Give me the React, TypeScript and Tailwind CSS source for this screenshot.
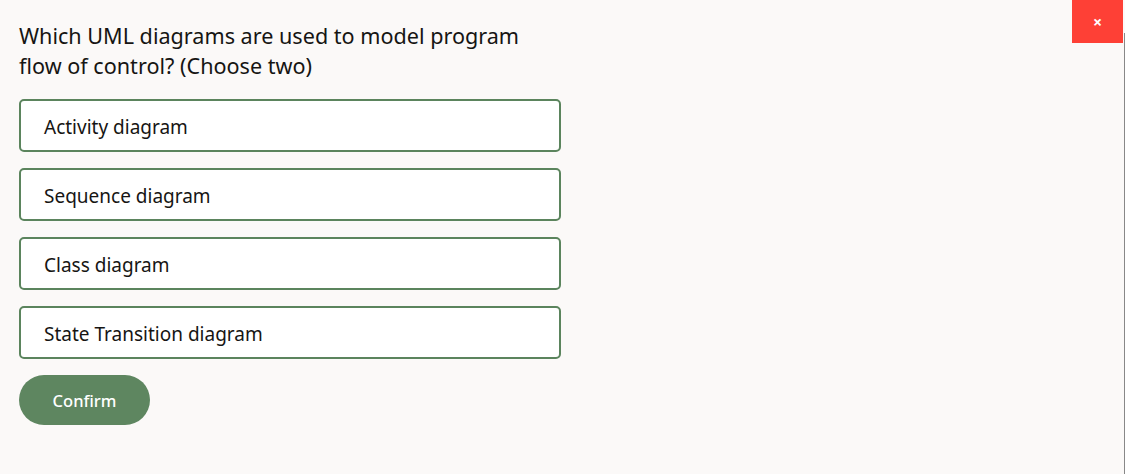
import React from "react";

const options = [
  "Activity diagram",
  "Sequence diagram",
  "Class diagram",
  "State Transition diagram",
];

export default function App() {
  return (
    <div
      className="relative flex h-[474px] w-[1125px] bg-[#fbf9f8] text-[#161513]"
      style={{ fontFamily: '"Noto Sans", "Open Sans", sans-serif' }}
    >
      <div className="flex w-[542px] flex-col pl-[19px] pt-[21px]">
        <h1 className="text-[21.6px] leading-[30px] text-[#161513]">
          Which UML diagrams are used to model program flow of control? (Choose two)
        </h1>
        <div className="mt-[18px] flex flex-col gap-4">
          {options.map((o) => (
            <button
              key={o}
              className="flex h-[53px] w-[542px] items-center rounded-[5px] border-2 border-[#5b845d] bg-white pl-[23px] pt-[3px] text-left text-[19px] text-[#161513]"
            >
              {o}
            </button>
          ))}
        </div>
        <button className="mt-4 flex h-[50px] w-[131px] items-center justify-center rounded-full bg-[#5e8660] pt-[2px] text-[16.5px] font-medium text-white">
          Confirm
        </button>
      </div>
      <button className="absolute right-[2px] top-0 flex h-[43px] w-[51px] items-center justify-center bg-[#fe4036] text-[16px] font-bold text-white">
        ×
      </button>
      <div className="absolute right-0 top-[33px] h-[441px] w-px bg-[#888]" />
    </div>
  );
}
